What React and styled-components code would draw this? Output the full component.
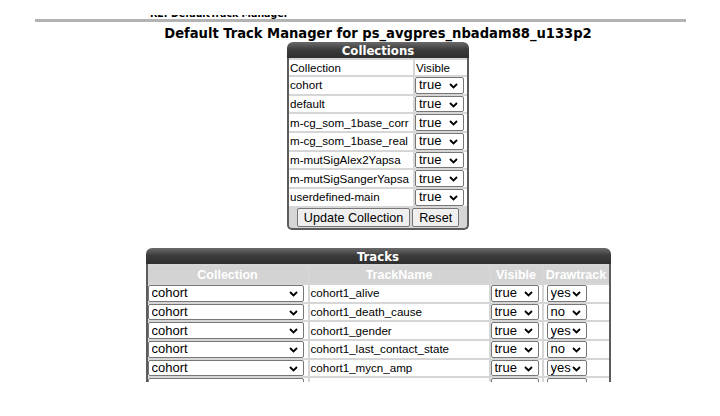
import React from 'react';
import styled, {createGlobalStyle} from 'styled-components';

const GlobalStyle = createGlobalStyle`
  html, body {
    background: #fff;
    margin: 0;
    padding: 0;
  }

  body {
    color: #000;
    font-family: "Liberation Sans", Arial, sans-serif;
  }
`;

const condensed = `"DejaVu Sans Condensed", "DejaVu Sans", sans-serif`;

const Page = styled.div`
  height: 382px;
  overflow: hidden;
`;

const Crumb = styled.div`
  height: 4px;
  margin: 15px 0 0 150px;
  overflow: hidden;
`;

const CrumbText = styled.div`
  font-family: ${condensed};
  font-size: 10.5px;
  font-stretch: condensed;
  font-weight: 700;
  line-height: 14px;
  margin-top: -9px;
  white-space: nowrap;
`;

const Rule = styled.div`
  background: #b3b3b3;
  height: 3px;
  margin: 0 34px 0 35px;
`;

const Content = styled.div`
  align-items: center;
  display: flex;
  flex-direction: column;
  padding-left: 36px;
`;

const Title = styled.h1`
  font-family: ${condensed};
  font-size: 14.6px;
  font-stretch: condensed;
  font-weight: 700;
  line-height: 18px;
  margin: 2px 0 0;
  white-space: nowrap;
`;

const Panel = styled.div`
  margin-top: ${props => props.gap || 0}px;
  width: ${props => props.width}px;
`;

const PanelHeader = styled.div`
  background: linear-gradient(#6a6a6a, #3c3c3c 45%, #2c2c2c);
  border-radius: 6px 6px 0 0;
  color: #fff;
  font-family: ${condensed};
  font-size: 13px;
  font-stretch: condensed;
  font-weight: 700;
  height: 17px;
  line-height: 17px;
  text-align: center;
`;

const PanelBody = styled.div`
  background: #d6d6d6;
  border: 2px solid #5c5c5c;
  border-radius: 0 0 ${props => (props.open ? 0 : 5)}px ${props => (props.open ? 0 : 5)}px;
  border-top: none;
`;

const Table = styled.table`
  border-collapse: separate;
  border-spacing: 2px;
  margin: -1px -2px;
  width: calc(100% + 4px);
`;

const Cell = styled.td`
  background: #fff;
  font-size: 11.6px;
  height: ${props => (props.short ? '15px' : 'auto')};
  line-height: 14px;
  padding: 0 0 0 1px;
  white-space: nowrap;
  width: ${props => (props.width ? `${props.width}px` : 'auto')};
`;

const SelectCell = styled.td`
  background: #fff;
  padding: 0 0 0 ${props => props.inset || 0}px;
  width: ${props => (props.width ? `${props.width}px` : 'auto')};
`;

const HeadCell = styled.th`
  background: #d3d3d3;
  color: #fff;
  font-size: 12.5px;
  font-weight: 700;
  height: 16.5px;
  line-height: 14px;
  padding: 0;
  text-align: center;
  white-space: nowrap;
  width: ${props => props.width}px;
`;

const ButtonCell = styled.td`
  height: 19px;
  padding: 0;
  text-align: center;
`;

const SelectBox = styled.div`
  height: 16.7px;
  position: relative;
  width: ${props => props.width}px;

  svg {
    pointer-events: none;
    position: absolute;
    right: 6px;
    top: 6px;
  }
`;

const Select = styled.select`
  appearance: none;
  background: #fff;
  border: 1px solid #767676;
  border-radius: 2px;
  box-sizing: border-box;
  color: #000;
  display: block;
  font-family: "Liberation Sans", Arial, sans-serif;
  font-size: 13px;
  height: 16.7px;
  line-height: 14px;
  margin: 0;
  padding: 0 0 0 3px;
  width: 100%;
`;

const Button = styled.button`
  background: #efefef;
  border: 1px solid #767676;
  border-radius: 2px;
  color: #000;
  font-family: "Liberation Sans", Arial, sans-serif;
  font-size: 12.6px;
  height: 19px;
  margin: 0 1px;
  padding: 0 6px;
`;

const Chevron = () => (
  <svg width="9" height="6" viewBox="0 0 9 6">
    <path d="M1 1l3.5 3.5L8 1" fill="none" stroke="#000" strokeWidth="1.8" />
  </svg>
);

const Dropdown = ({width, value, options}) => (
  <SelectBox width={width}>
    <Select defaultValue={value}>
      {options.map(option => (
        <option key={option} value={option}>
          {option}
        </option>
      ))}
    </Select>
    <Chevron />
  </SelectBox>
);

const collections = [
  'cohort',
  'default',
  'm-cg_som_1base_corr',
  'm-cg_som_1base_real',
  'm-mutSigAlex2Yapsa',
  'm-mutSigSangerYapsa',
  'userdefined-main'
];

const tracks = [
  {name: 'cohort1_alive', draw: 'yes'},
  {name: 'cohort1_death_cause', draw: 'no'},
  {name: 'cohort1_gender', draw: 'yes'},
  {name: 'cohort1_last_contact_state', draw: 'no'},
  {name: 'cohort1_mycn_amp', draw: 'yes'},
  {name: '', draw: 'yes'}
];

const CollectionsPanel = () => (
  <Panel width={182}>
    <PanelHeader>Collections</PanelHeader>
    <PanelBody>
      <Table>
        <tbody>
          <tr>
            <Cell short>Collection</Cell>
            <Cell short width={51}>
              Visible
            </Cell>
          </tr>
          {collections.map(name => (
            <tr key={name}>
              <Cell>{name}</Cell>
              <SelectCell width={51}>
                <Dropdown width={49} value="true" options={['true', 'false']} />
              </SelectCell>
            </tr>
          ))}
          <tr>
            <ButtonCell colSpan={2}>
              <Button>Update Collection</Button>
              <Button>Reset</Button>
            </ButtonCell>
          </tr>
        </tbody>
      </Table>
    </PanelBody>
  </Panel>
);

const TracksPanel = () => (
  <Panel width={465} gap={18}>
    <PanelHeader>Tracks</PanelHeader>
    <PanelBody open>
      <Table>
        <thead>
          <tr>
            <HeadCell width={160}>Collection</HeadCell>
            <HeadCell width={179}>TrackName</HeadCell>
            <HeadCell width={51}>Visible</HeadCell>
            <HeadCell width={65}>Drawtrack</HeadCell>
          </tr>
        </thead>
        <tbody>
          {tracks.map((track, index) => (
            <tr key={index}>
              <SelectCell>
                <Dropdown width={156} value="cohort" options={collections} />
              </SelectCell>
              <Cell>{track.name}</Cell>
              <SelectCell>
                <Dropdown width={48} value="true" options={['true', 'false']} />
              </SelectCell>
              <SelectCell inset={3}>
                <Dropdown width={40} value={track.draw} options={['yes', 'no']} />
              </SelectCell>
            </tr>
          ))}
        </tbody>
      </Table>
    </PanelBody>
  </Panel>
);

const App = () => (
  <Page>
    <GlobalStyle />
    <Crumb>
      <CrumbText>R2: DefaultTrack Manager</CrumbText>
    </Crumb>
    <Rule />
    <Content>
      <Title>Default Track Manager for ps_avgpres_nbadam88_u133p2</Title>
      <CollectionsPanel />
      <TracksPanel />
    </Content>
  </Page>
);

export default App;
